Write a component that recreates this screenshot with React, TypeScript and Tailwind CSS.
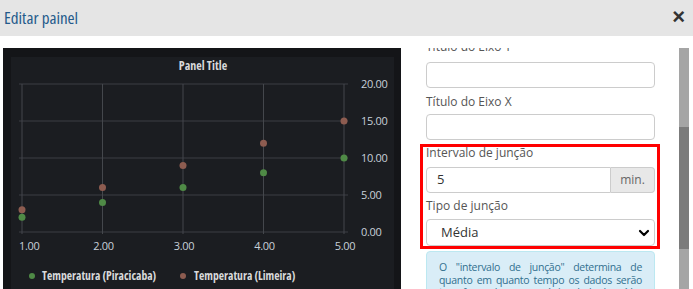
import React from "react";

const green = "#4f8a46";
const brown = "#8d5c50";

function Chart() {
  const xs = [22, 102.5, 183, 263.5, 344];
  const ys = [84, 121, 158, 195, 232];
  const yv = (v: number) => 232 - v * 7.4;
  const gData = [2, 4, 6, 8, 10];
  const bData = [3, 6, 9, 12, 15];
  const yLabels = ["20.00", "15.00", "10.00", "5.00", "0.00"];
  const font = "'Open Sans', 'DejaVu Sans', sans-serif";
  const cond = { fontStretch: "75%" } as React.CSSProperties;
  return (
    <svg width={383} height={232} viewBox="11 57 383 232" className="block">
      <text x={203} y={70} textAnchor="middle" fill="#d8d9da" fontSize={12} fontWeight={700} fontFamily={font} style={cond}>
        Panel Title
      </text>
      {ys.map((y) => (
        <line key={"h" + y} x1={19} x2={348} y1={y} y2={y} stroke="#3c3f44" strokeWidth={1} />
      ))}
      {xs.map((x) => (
        <line key={"v" + x} x1={x} x2={x} y1={84} y2={234} stroke="#44474c" strokeWidth={1} />
      ))}
      {yLabels.map((l, i) => (
        <text key={l} x={361} y={ys[i] + 4} fill="#c7d0d9" fontSize={11} fontFamily={font} letterSpacing={-0.3}>
          {l}
        </text>
      ))}
      {["1.00", "2.00", "3.00", "4.00", "5.00"].map((l, i) =>
        i === 0 ? (
          <text key={l} x={19} y={250} fill="#c7d0d9" fontSize={11} fontFamily={font} letterSpacing={-0.3}>
            {l}
          </text>
        ) : (
          <text key={l} x={xs[i] + 1} y={250} textAnchor="middle" fill="#c7d0d9" fontSize={11} fontFamily={font} letterSpacing={-0.3}>
            {l}
          </text>
        )
      )}
      {bData.map((v, i) => (
        <circle key={"b" + i} cx={xs[i]} cy={yv(v)} r={3.5} fill={brown} />
      ))}
      {gData.map((v, i) => (
        <circle key={"g" + i} cx={xs[i]} cy={yv(v)} r={3.5} fill={green} />
      ))}
      <circle cx={32} cy={276} r={3} fill={green} />
      <text x={42} y={280} fill="#d8d9da" fontSize={11.6} fontWeight={700} fontFamily={font} style={cond}>
        Temperatura (Piracicaba)
      </text>
      <circle cx={183} cy={276} r={3} fill={brown} />
      <text x={194} y={280} fill="#d8d9da" fontSize={11.6} fontWeight={700} fontFamily={font} style={cond}>
        Temperatura (Limeira)
      </text>
    </svg>
  );
}

export default function App() {
  return (
    <div className="h-[289px] w-[693px] overflow-hidden bg-white font-['Open_Sans',sans-serif]">
      <div className="h-[36px] bg-[#e5e5e5] flex items-center justify-between pl-[4px] pr-[8px]">
        <span className="text-[17px] leading-none text-[#245a8b] [font-stretch:83%] -mt-[2px]">Editar painel</span>
        <span className="text-[22px] leading-none font-bold text-[#333] font-['Liberation_Sans',sans-serif] -mt-[2px]">×</span>
      </div>
      <div className="flex mt-[12px] h-[241px]">
        <div className="ml-[3px] w-[398px] bg-[#141518] pl-[8px] pt-[9px] pr-[7px]">
          <div className="bg-[#1b1d21] h-full">
            <Chart />
          </div>
        </div>
        <div className="ml-[18px] w-[243px] overflow-hidden px-[7px]">
          <div className="-mt-[7px] flex flex-col text-[12px] text-[#555]">
            <label className="leading-[12px] h-[12px]">Título do Eixo Y</label>
            <div className="mt-[9px] h-[26px] rounded-[4px] border border-[#ccc] bg-white" />
            <label className="mt-[8px] leading-[12px] h-[12px]">Título do Eixo X</label>
            <div className="mt-[6px] h-[26px] rounded-[4px] border border-[#ccc] bg-white" />
            <div className="mt-[7px] -ml-[3px] -mr-[2px] pl-[3px] pr-[2px] outline outline-[3px] outline-[#ff0000]">
              <label className="block leading-[12px] h-[12px]">Intervalo de junção</label>
              <div className="mt-[8px] h-[26px] flex">
                <div className="flex-1 rounded-l-[4px] border border-[#ccc] bg-white flex items-center pl-[10px] text-[13px] text-[#333]">
                  5
                </div>
                <div className="w-[44px] rounded-r-[4px] border border-l-0 border-[#ccc] bg-[#e8e8e8] flex items-center justify-center text-[12px] text-[#666]">
                  min.
                </div>
              </div>
              <label className="block mt-[7px] leading-[12px] h-[12px]">Tipo de junção</label>
              <div className="mt-[7px] h-[27px] rounded-[4px] border border-[#ccc] bg-white flex items-center justify-between pl-[14px] pr-[4px] text-[13px] text-[#333]">
                <span>Média</span>
                <svg width="12" height="12" viewBox="0 0 12 12">
                  <path d="M2 4 L6 8 L10 4" stroke="#000" strokeWidth="2.2" fill="none" strokeLinecap="round" strokeLinejoin="round" />
                </svg>
              </div>
            </div>
            <div className="mt-[5px] rounded-t-[4px] border border-[#bce8f1] bg-[#d9edf7] px-[12px] pt-[9px] pb-[10px] text-[10.5px] leading-[12.5px] tracking-[-0.3px] text-[#31708f] text-justify">
              O "intervalo de junção" determina de quanto em quanto tempo os dados serão transformados em um único dado de saída.
            </div>
          </div>
        </div>
        <div className="ml-[17px] w-[10px] flex flex-col">
          <div className="h-[79px] bg-[#a5a5a5]" />
          <div className="h-[122px] bg-[#7b7b7b]" />
          <div className="flex-1 bg-[#a5a5a5]" />
        </div>
      </div>
    </div>
  );
}
